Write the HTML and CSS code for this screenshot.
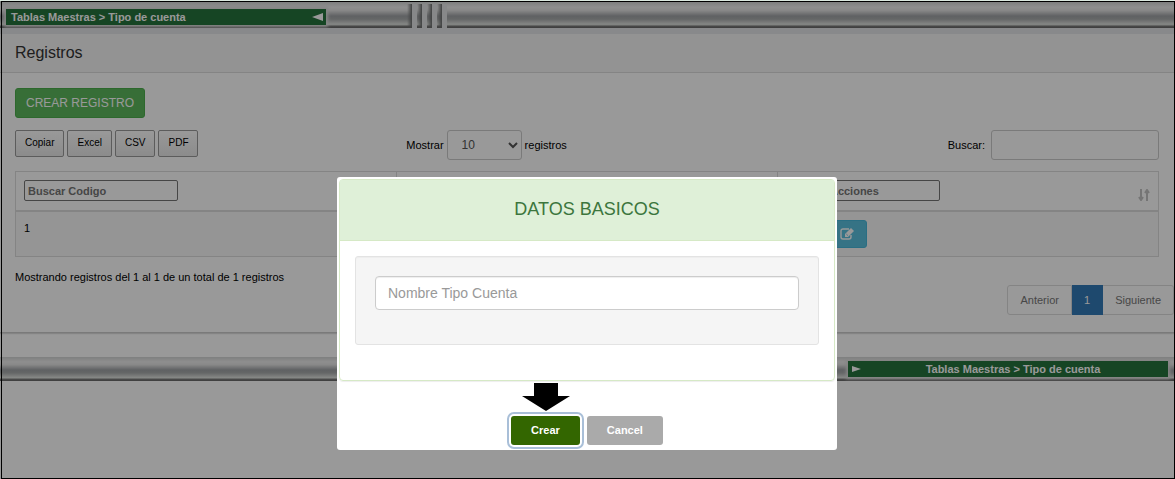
FILE: index.html
```html
<!DOCTYPE html>
<html lang="es">
<head>
<meta charset="utf-8">
<title>Tipo de cuenta</title>
<link rel="stylesheet" href="styles.css">
</head>
<body>
<div class="page">
  <header class="bar bar-top">
    <div class="crumb crumb-top"><span>Tablas Maestras &gt; Tipo de cuenta</span>
      <svg width="12" height="8" viewBox="0 0 12 8"><path d="M0 4 11 0v8z" fill="currentColor"/></svg>
    </div>
    <div class="ribs"><i></i><i></i><i></i><i></i></div>
  </header>
  <main class="panel">
    <h1 class="panel-title">Registros</h1>
    <div class="panel-body">
      <button class="btn-create" type="button">CREAR REGISTRO</button>
      <div class="tools">
        <div class="exports">
          <button type="button">Copiar</button><button type="button">Excel</button><button type="button">CSV</button><button type="button">PDF</button>
        </div>
        <label class="length">Mostrar
          <select><option>10</option></select>
          registros</label>
        <label class="search">Buscar: <input type="search"></label>
      </div>
      <table class="grid">
        <thead>
          <tr>
            <th><input type="text" placeholder="Buscar Codigo" aria-label="Buscar Codigo"></th>
            <th></th>
            <th><div class="head-cell"><input type="text" placeholder="Buscar Acciones" aria-label="Buscar Acciones">
              <svg class="sort" width="12" height="12" viewBox="0 0 12 12"><path d="M3 0v10M1 8l2 3 2-3M9 12V2M7 4l2-3 2 3" fill="none" stroke="currentColor" stroke-width="2"/></svg></div></th>
          </tr>
        </thead>
        <tbody>
          <tr>
            <td>1</td>
            <td></td>
            <td><button class="btn-edit" type="button" aria-label="Editar">
              <svg width="15" height="14" viewBox="0 0 15 14"><path d="M9 2H3Q1 2 1 4v6q0 2 2 2h6q2 0 2-2V8" fill="none" stroke="currentColor" stroke-width="1.4"/><path d="m5 7 6-6 3 3-6 6H5z" fill="currentColor"/><path d="m6.300 7 1.700 1.700" stroke="#5bc0de" stroke-width=".8"/></svg>
            </button></td>
          </tr>
        </tbody>
      </table>
      <div class="table-foot">
        <p>Mostrando registros del 1 al 1 de un total de 1 registros</p>
        <nav class="pager"><a href="#">Anterior</a><a href="#" class="current">1</a><a href="#">Siguiente</a></nav>
      </div>
    </div>
  </main>
  <footer class="bar bar-bottom">
    <div class="crumb crumb-bottom">
      <svg width="10" height="6" viewBox="0 0 10 6"><path d="M0 0 9 3 0 6z" fill="currentColor"/></svg>
      <span>Tablas Maestras &gt; Tipo de cuenta</span>
    </div>
  </footer>
</div>
<div class="backdrop">
  <form class="dialog" role="dialog" aria-labelledby="dialog-title">
    <section class="card">
      <h2 id="dialog-title">DATOS BASICOS</h2>
      <div class="card-body">
        <div class="well"><input type="text" placeholder="Nombre Tipo Cuenta" aria-label="Nombre Tipo Cuenta"></div>
      </div>
    </section>
    <div class="actions">
      <svg class="arrow" width="48" height="28" viewBox="0 0 48 28"><path d="M12 0h24v13h12L24 28 0 13h12z"/></svg>
      <button class="btn-ok" type="button">Crear</button>
      <button class="btn-cancel" type="button">Cancel</button>
    </div>
  </form>
</div>
</body>
</html>
```
FILE: styles.css
```css
* { box-sizing: border-box; }
body {
  margin: 0;
  overflow: hidden;
  background: #fff;
  color: #000;
  font: 11px/16px "Liberation Sans", Arial, sans-serif;
}
button, input, select { font: inherit; }
.page { border-top: 2px solid #dbe8df; }

/* Metallic bars */
.bar {
  display: flex;
  background: linear-gradient(#d2d4d4 0, #eee 20%, #e4e4e4 32%, #a0a3a6 54%, #a8abac 66%, #dfe2df 86%, #777 94%, #666 100%);
}
.bar-top { height: 26px; padding: 7px 0 0 6px; position: relative; }
.crumb {
  display: flex;
  align-items: center;
  width: 320px;
  height: 16px;
  background: #25733c;
  color: #fff;
  font-weight: bold;
  box-shadow: 0 0 3px 2px #ddd;
}
.crumb-top { justify-content: space-between; padding: 0 2px 0 5px; }
.ribs { position: absolute; left: 407px; top: 2px; display: flex; height: 24px; }
.ribs i {
  width: 10px;
  background: linear-gradient(90deg, rgba(225, 227, 228, 0), #707272 48%, #e1e3e4 50%, #e1e3e4);
}

/* Records panel */
.panel { border-top: 6px solid #e3e4e8; border-bottom: 1px solid #ccc; box-shadow: 0 1px 1px #ddd; }
.panel-title {
  margin: 0;
  padding: 9px 15px;
  font-size: 16px;
  line-height: 20px;
  font-weight: normal;
  color: #333;
  background: #f5f5f5;
  border-bottom: 1px solid #ddd;
}
.panel-body { padding: 15px 16px 17px 15px; }
.btn-create {
  display: block;
  height: 30px;
  padding: 0 10px;
  border: 1px solid #4cae4c;
  border-radius: 3px;
  background: #5cb85c;
  color: #fff;
  font-size: 12px;
}
.tools { display: grid; grid-template-columns: 1fr 1fr 1fr; align-items: start; margin: 12px 0 11px; }
.exports { display: flex; gap: 3px; }
.exports button {
  height: 27px;
  padding: 0 9px 2px;
  border: 1px solid #999;
  border-radius: 2px;
  background: linear-gradient(#fff, #e9e9e9);
  color: #000;
  font-size: 10px;
}
.length, .search { display: flex; align-items: center; gap: 3px; }
.length { padding-left: 10px; }
.search { justify-content: flex-end; gap: 6px; }
.length select, .search input {
  height: 30px;
  border: 1px solid #ccc;
  border-radius: 3px;
  background-color: #fff;
  color: #555;
}
.length select { width: 75px; padding: 0 10px; font-size: 12px; }
.search input { width: 168px; }
.grid { width: 100%; table-layout: fixed; border-collapse: collapse; border: 1px solid #ddd; }
.grid th { height: 39px; padding: 8px; border-left: 1px solid #ddd; border-bottom: 2px solid #ddd; text-align: left; vertical-align: top; }
.grid td { height: 46px; padding: 8px; border-left: 1px solid #ddd; background: #f9f9f9; vertical-align: top; }
.grid input {
  display: block;
  width: 154px;
  height: 21px;
  padding: 0 3px;
  border: 1px solid #767676;
  border-radius: 2px;
  background: #fff;
  font-weight: bold;
}
.grid input::placeholder { color: #757575; }
.head-cell { display: flex; justify-content: space-between; align-items: flex-end; }
.sort { color: #c4c4c4; }
.btn-edit {
  display: flex;
  align-items: center;
  justify-content: center;
  width: 40px;
  height: 28px;
  margin-left: 41px;
  padding: 0;
  border: 1px solid #46b8da;
  border-radius: 3px;
  background: #5bc0de;
  color: #fff;
}
.table-foot { display: flex; justify-content: space-between; align-items: flex-start; padding-top: 12px; }
.table-foot p { margin: 0; }
.pager { display: flex; margin: 16px -15px 0 0; }
.pager a {
  padding: 6px 12px;
  border: 1px solid #ddd;
  border-left-width: 0;
  color: #777;
  text-decoration: none;
}
.pager a:first-child { border-left-width: 1px; border-radius: 3px 0 0 3px; }
.pager a:last-child { border-radius: 0 3px 3px 0; }
.pager .current { border-color: #337ab7; background: #337ab7; color: #fff; }

.bar-bottom { height: 24px; margin-top: 24px; padding: 4px 7px 0 0; justify-content: flex-end; }
.crumb-bottom { padding: 0 4px; }
.crumb-bottom span { flex: 1; text-align: center; }

/* Dialog */
.backdrop {
  position: fixed;
  inset: 1px 0 0 0;
  display: flex;
  justify-content: center;
  align-items: flex-start;
  padding: 176px 1px 0 0;
  background: rgba(0, 0, 0, .4);
}
.backdrop::before {
  content: "";
  position: absolute;
  inset: 0 0 0 1px;
  border: 1px solid #000;
}
.dialog { position: relative; width: 500px; padding: 2px; border-radius: 3px; background: #fff; }
.card { border: 1px solid #d6e9c6; border-radius: 4px; box-shadow: 0 1px 1px #eee; }
.card h2 {
  margin: 0;
  padding: 19px 15px 21px;
  border-bottom: 1px solid #d6e9c6;
  background: #dff0d8;
  color: #3c763d;
  font-size: 18px;
  line-height: 20px;
  font-weight: normal;
  text-align: center;
}
.card-body { padding: 15px 15px 35px; }
.well {
  padding: 19px 19px 34px;
  border: 1px solid #e3e3e3;
  border-radius: 3px;
  background: #f5f5f5;
  box-shadow: inset 0 1px 1px #eee;
}
.well input {
  display: block;
  width: 100%;
  height: 34px;
  padding: 0 12px;
  border: 1px solid #ccc;
  border-radius: 4px;
  background: #fff;
  box-shadow: inset 0 1px 1px #eee;
  font-size: 14px;
}
.well input::placeholder { color: #999; }
.actions { position: relative; display: flex; justify-content: center; gap: 7px; padding: 35px 0 3px; }
.arrow { position: absolute; left: 183px; top: 2px; }
.actions button {
  height: 29px;
  padding: 0 20px 1px;
  border: 0;
  border-radius: 3px;
  color: #fff;
  font-weight: bold;
}
.actions .btn-ok { background: #360; box-shadow: 0 0 0 2px #fff, 0 0 0 4px #a9bfd8; }
.actions .btn-cancel { background: #aaa; }
```
